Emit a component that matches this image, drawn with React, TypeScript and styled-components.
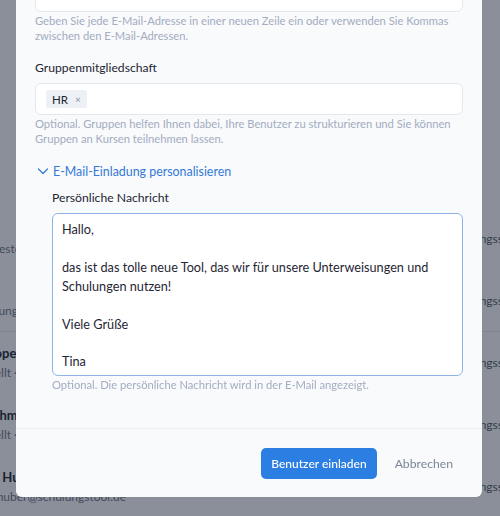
import React from "react";
import styled, { createGlobalStyle } from "styled-components";

const GlobalStyle = createGlobalStyle`
  html, body {
    margin: 0;
    padding: 0;
    background: #ffffff;
    font-family: "Lato", "Noto Sans", sans-serif;
    -webkit-font-smoothing: antialiased;
  }
  * { box-sizing: border-box; }
`;

const colors = {
  text: "#1f2533",
  help: "#a3acc0",
  border: "#e3e8ef",
  blue: "#3479d6",
  button: "#2c7fe2",
  muted: "#7c8598",
  modal: "#f8fafc",
};

/* ---------- background page ---------- */

const Page = styled.div`
  height: 516px;
  overflow: hidden;
  margin-left: -42px;
  padding-top: 208px;
`;

const Row = styled.div<{ $line?: boolean }>`
  display: grid;
  grid-template-columns: 461px 140px;
  height: 62px;
  align-items: center;
  border-bottom: 1px solid ${(p) => (p.$line ? "#e5e7eb" : "transparent")};
`;

const Person = styled.div`
  display: flex;
  flex-direction: column;
  gap: 4px;
`;

const Name = styled.span`
  font-size: 13px;
  font-weight: 700;
  color: #111827;
`;

const Meta = styled.span`
  font-size: 12px;
  color: #6b7280;
`;

const Status = styled.span`
  font-size: 12px;
  color: #4b5563;
`;

/* ---------- modal ---------- */

const Overlay = styled.div`
  position: fixed;
  inset: 0;
  background: rgba(30, 41, 59, 0.52);
  display: flex;
  flex-direction: column;
  justify-content: flex-end;
  align-items: center;
  padding-bottom: 19px;
  overflow: hidden;
`;

const Modal = styled.div`
  width: 466px;
  margin-left: -2px;
  flex-shrink: 0;
  background: ${colors.modal};
  border-radius: 6px;
  display: flex;
  flex-direction: column;
`;

const Body = styled.div`
  padding: 20px 19px 36px 19px;
  display: flex;
  flex-direction: column;
`;

const Title = styled.h2`
  margin: 0 0 20px;
  font-size: 17px;
  font-weight: 700;
  color: ${colors.text};
`;

const Field = styled.div`
  display: flex;
  flex-direction: column;
  margin-bottom: 16px;
`;

const Label = styled.label`
  font-size: 12.2px;
  line-height: 18px;
  color: ${colors.text};
  margin-bottom: 6px;
`;

const Box = styled.div`
  background: #ffffff;
  border: 1px solid ${colors.border};
  border-radius: 6px;
`;

const EmailBox = styled(Box)`
  height: 80px;
`;

const TagBox = styled(Box)`
  height: 32px;
  display: flex;
  align-items: center;
  padding: 0 10px;
`;

const Tag = styled.span`
  display: inline-flex;
  align-items: center;
  gap: 7px;
  height: 18px;
  padding: 0 6px;
  border-radius: 2px;
  background: #edf1f6;
  font-size: 11.5px;
  color: ${colors.text};
`;

const TagRemove = styled.span`
  font-size: 10px;
  color: #8a93a6;
`;

const Help = styled.p`
  margin: 1px 0 0;
  font-size: 11.2px;
  line-height: 15px;
  color: ${colors.help};
`;

const Toggle = styled.button`
  display: flex;
  align-items: center;
  gap: 4px;
  height: 18px;
  padding: 0 0 0 2px;
  margin: 0 0 9px;
  border: none;
  background: none;
  font-family: inherit;
  font-size: 12.4px;
  color: ${colors.blue};
  cursor: pointer;
`;

const Indented = styled.div`
  padding-left: 17px;
  display: flex;
  flex-direction: column;
`;

const Message = styled.textarea`
  height: 163px;
  resize: none;
  padding: 6px 9px;
  border: 1px solid #8fb4e8;
  border-radius: 6px;
  background: #ffffff;
  font-family: inherit;
  font-size: 12.7px;
  line-height: 18.9px;
  color: ${colors.text};
  outline: none;
  overflow: hidden;
`;

const Footer = styled.div`
  height: 69px;
  border-top: 1px solid #e9edf2;
  display: flex;
  align-items: center;
  justify-content: flex-end;
  gap: 8px;
  padding: 0 19px;
`;

const Primary = styled.button`
  height: 31px;
  padding: 0 10px;
  border: none;
  border-radius: 5px;
  background: ${colors.button};
  color: #ffffff;
  font-family: inherit;
  font-size: 12px;
  font-weight: 500;
  cursor: pointer;
`;

const Ghost = styled.button`
  height: 31px;
  padding: 0 10px;
  border: none;
  background: none;
  color: ${colors.muted};
  font-family: inherit;
  font-size: 12.2px;
  cursor: pointer;
`;

const people = [
  { name: "Anna", meta: "Festangestellt · anna@firma.de", line: false },
  { name: "Julia", meta: "Verwaltung · julia@firma.wu", line: true },
  { name: "Paul Koperl", meta: "Angestellt · frei", line: false },
  { name: "Tina Schmitt", meta: "Angestellt · tina@firma.de", line: false },
  { name: "Miriam Huber", meta: "miriam.huber@schulungstool.de", line: false },
];

const message = `Hallo,

das ist das tolle neue Tool, das wir für unsere Unterweisungen und Schulungen nutzen!

Viele Grüße

Tina`;

const Chevron = () => (
  <svg width="12" height="12" viewBox="0 0 24 24" fill="none" stroke="currentColor" strokeWidth="2.4" strokeLinecap="round" strokeLinejoin="round">
    <path d="M3 8l9 9 9-9" />
  </svg>
);

const App = () => {
  return (
    <>
      <GlobalStyle />
      <Page>
        {people.map((p) => (
          <Row key={p.name} $line={p.line}>
            <Person>
              <Name>{p.name}</Name>
              <Meta>{p.meta}</Meta>
            </Person>
            <Status>Unterweisungsstatus</Status>
          </Row>
        ))}
      </Page>
      <Overlay>
        <Modal>
          <Body>
            <Title>Benutzer einladen</Title>
            <Field>
              <Label>E-Mail-Adressen</Label>
              <EmailBox />
              <Help>
                Geben Sie jede E-Mail-Adresse in einer neuen Zeile ein oder verwenden Sie Kommas
                zwischen den E-Mail-Adressen.
              </Help>
            </Field>
            <Field>
              <Label>Gruppenmitgliedschaft</Label>
              <TagBox>
                <Tag>
                  HR <TagRemove>×</TagRemove>
                </Tag>
              </TagBox>
              <Help>
                Optional. Gruppen helfen Ihnen dabei, Ihre Benutzer zu strukturieren und Sie können
                Gruppen an Kursen teilnehmen lassen.
              </Help>
            </Field>
            <Toggle type="button">
              <Chevron />
              E-Mail-Einladung personalisieren
            </Toggle>
            <Indented>
              <Label>Persönliche Nachricht</Label>
              <Message defaultValue={message} />
              <Help>Optional. Die persönliche Nachricht wird in der E-Mail angezeigt.</Help>
            </Indented>
          </Body>
          <Footer>
            <Primary type="button">Benutzer einladen</Primary>
            <Ghost type="button">Abbrechen</Ghost>
          </Footer>
        </Modal>
      </Overlay>
    </>
  );
};

export default App;
